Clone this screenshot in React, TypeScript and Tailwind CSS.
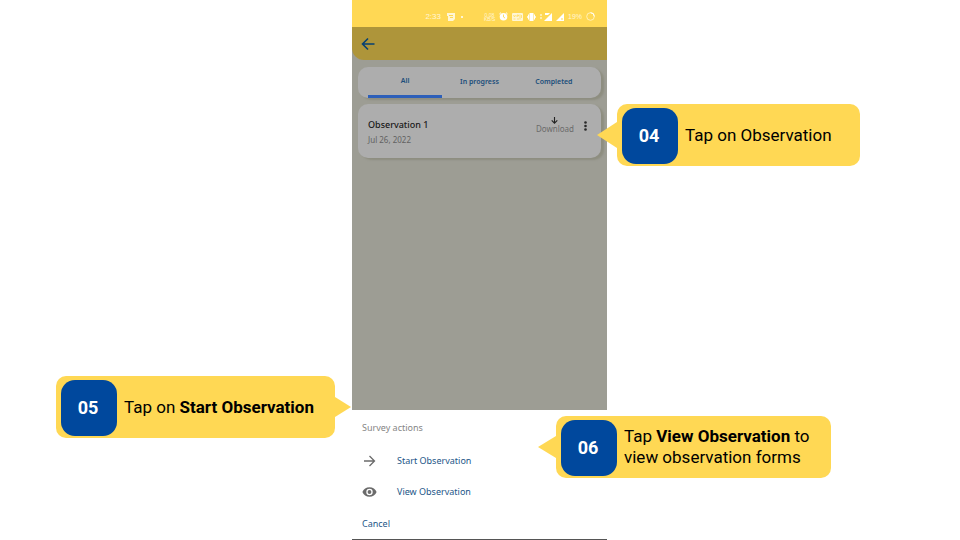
import React from "react";

type Side = "left" | "right";

function Callout({
  step,
  side,
  place,
  tail,
  children,
}: {
  step: string;
  side: Side;
  place: string;
  tail: string;
  children: React.ReactNode;
}) {
  return (
    <div
      className={`absolute flex items-center gap-[7px] rounded-[10px] bg-[#ffd854] pt-1 pb-0.5 pl-[5px] font-[Roboto,sans-serif] ${place}`}
    >
      <svg
        viewBox="0 0 20 26"
        preserveAspectRatio="none"
        className={`absolute ${tail}`}
        fill="#ffd854"
        aria-hidden="true"
      >
        <path d={side === "left" ? "M20 0L0 13l20 13z" : "M0 0l20 13L0 26z"} />
      </svg>
      <div className="flex size-14 shrink-0 items-center justify-center rounded-[14px] bg-[#00489d] text-lg font-bold text-white">
        <span className="pr-0.5">{step}</span>
      </div>
      <p className="pb-0.5 text-[17px] leading-[21px] whitespace-nowrap text-black">{children}</p>
    </div>
  );
}

function StatusBar() {
  return (
    <div className="flex h-[27px] shrink-0 items-center bg-[#ffd854] pt-[6px] pr-3 text-[#fff6d5]">
      <div className="ml-auto flex items-center gap-[6px]">
        <span className="font-['Liberation_Sans',sans-serif] text-[8px] leading-none">2:33</span>
        <svg className="h-2 w-2" viewBox="0 0 8 8" fill="currentColor" aria-hidden="true">
          <path fillRule="evenodd" d="M0 0h8v6l-2 2H1V3H0zM2 2v1h4V2zM3 4v1h3V4z" />
        </svg>
        <span className="size-[2px] rounded-full bg-white" />
      </div>
      <div className="ml-[21px] flex items-center gap-1">
        <span className="w-[11px] text-center font-['Liberation_Sans',sans-serif] text-[5px] leading-[4px]">
          0.08 KB/S
        </span>
        <svg className="h-[9px] w-[9px]" viewBox="0 0 9 9" fill="none" aria-hidden="true">
          <circle cx="4.5" cy="4.8" r="3.8" fill="#fff" />
          <path d="M.4 2L2 .6M8.6 2L7 .6" stroke="#fff" />
          <path d="M4.5 2.500v2.500l1.500 1" stroke="#ffd854" strokeWidth=".9" />
        </svg>
        <svg className="h-2 w-[11px]" viewBox="0 0 11 8" aria-hidden="true">
          <rect width="11" height="8" rx="1" fill="#fff6d5" />
          <path d="M1.500 2l1 2 1-2M5 4V2h1.500v1H5M8 1.500v5M1.500 6h2M5 6h2M9.500 2v3" stroke="#ffd854" fill="none" strokeWidth=".7" />
        </svg>
        <svg className="h-2 w-[9px]" viewBox="0 0 9 8" fill="#fff" aria-hidden="true">
          <path d="M2.500 0h4v8h-4zM1 1.500h1v5H1zM7 1.500h1v5H7zM0 3h.7v2H0zM8.300 3H9v2h-.7z" />
        </svg>
        <svg className="h-2 w-[12px]" viewBox="0 0 12 8" fill="#fff" aria-hidden="true">
          <path d="M12 0v8H4zM0 1.500h2v1H0zM0 4.500h2v1H0zM5 0h5L8 2H5z" />
        </svg>
        <svg className="h-2 w-2" viewBox="0 0 8 8" fill="#fff" aria-hidden="true">
          <path fillRule="evenodd" d="M8 0v8H0zM5.500 5v2h1V5z" />
        </svg>
        <span className="font-['Liberation_Sans',sans-serif] text-[7px] leading-none">19%</span>
        <svg className="h-[9px] w-[9px]" viewBox="0 0 9 9" fill="none" aria-hidden="true">
          <circle cx="4.500" cy="4.500" r="3.800" stroke="#fff0b8" />
          <path d="M4.500.7a3.800 3.800 0 0 1 3.800 3.800" stroke="#fff" />
        </svg>
      </div>
    </div>
  );
}

const tabs = ["All", "In progress", "Completed"];

export default function App() {
  return (
    <main className="flex h-screen justify-center bg-white pr-px">
      <div className="relative flex h-full w-[255px] flex-col font-['Noto_Sans',sans-serif]">
        <StatusBar />
        <div className="flex flex-1 flex-col bg-[#9d9d94]">
          <header className="flex h-[33px] shrink-0 items-center rounded-bl-xl bg-[#ae953a] px-[9px]">
            <button type="button" aria-label="Back">
              <svg className="h-[14px] w-[14px]" viewBox="0 0 14 14" fill="none" stroke="#064073" strokeWidth="1.600" aria-hidden="true">
                <path d="M13.500 7H1.500M7 1.500L1.500 7 7 12.500" />
              </svg>
            </button>
          </header>

          <nav className="mx-[6px] mt-[7px] grid h-[31px] shrink-0 grid-cols-3 rounded-[10px] bg-[#adadad] px-[10px] shadow-[3px_2px_2px_#8e8e80]">
            {tabs.map((tab, i) => (
              <button
                key={tab}
                type="button"
                className={
                  i === 0
                    ? "border-b-[3px] border-[#2d5fb9] text-[7px] font-semibold text-[#1b4d7b]"
                    : "text-[7px] font-semibold text-[#1b4d7b]"
                }
              >
                {tab}
              </button>
            ))}
          </nav>

          <section className="mx-[6px] mt-[6px] flex h-[54px] shrink-0 items-start rounded-[10px] bg-[#adadad] px-[10px] shadow-[3px_2px_2px_#8e8e80]">
            <div className="flex-1 pt-[15px]">
              <h2 className="text-[9px] leading-3 font-medium text-[#181818]">Observation 1</h2>
              <p className="mt-[3px] text-[8px] leading-3 text-[#626262]">Jul 26, 2022</p>
            </div>
            <button type="button" className="flex flex-col items-center pt-[13px] text-[8px] leading-[10px] text-[#6b6b6b]">
              <svg className="h-[7px] w-[7px]" viewBox="0 0 7 7" fill="none" stroke="#222" strokeWidth="1.100" aria-hidden="true">
                <path d="M3.500 0v6M.7 3.400l2.800 2.800 2.800-2.800" />
              </svg>
              Download
            </button>
            <button type="button" aria-label="More options" className="ml-[10px] pt-[17px] pr-1">
              <svg className="h-[10px] w-[3px]" viewBox="0 0 3 10" fill="#292929" aria-hidden="true">
                <circle cx="1.500" cy="1.500" r="1.300" />
                <circle cx="1.500" cy="5" r="1.300" />
                <circle cx="1.500" cy="8.500" r="1.300" />
              </svg>
            </button>
          </section>
        </div>

        <section className="flex h-[130px] shrink-0 flex-col items-start border-b border-[#555] bg-white px-[10px] text-[9px] leading-3 text-[#1c5688]">
          <h3 className="mt-3 text-[#858585]">Survey actions</h3>
          <button type="button" className="mt-[21px] flex items-center">
            <svg className="mr-[20px] h-3 w-[15px]" viewBox="0 0 15 12" fill="none" stroke="#6b6b6b" strokeWidth="1.300" aria-hidden="true">
              <path d="M2 6h10.500M7.500 1l5 5-5 5" />
            </svg>
            <span>Start Observation</span>
          </button>
          <button type="button" className="mt-[19px] flex items-center">
            <svg className="mr-[20px] h-3 w-[15px]" viewBox="0 0 15 12" fill="#6b6b6b" aria-hidden="true">
              <path
                fillRule="evenodd"
                d="M7.500 1.200C4.200 1.200 1.600 3.200.4 6c1.200 2.800 3.800 4.800 7.100 4.800s5.900-2 7.100-4.800C13.400 3.200 10.800 1.200 7.500 1.200zM7.500 9.200a3.200 3.200 0 1 1 0-6.400 3.200 3.200 0 0 1 0 6.400zM7.500 4.100a1.900 1.900 0 1 0 0 3.800 1.900 1.900 0 0 0 0-3.800z"
              />
            </svg>
            <span>View Observation</span>
          </button>
          <button type="button" className="mt-5">Cancel</button>
        </section>

        <Callout step="04" side="left" place="top-[104px] left-[265px] h-[62px] w-[243px]" tail="top-[18px] right-full h-[26px] w-5">
          Tap on Observation
        </Callout>
        <Callout step="05" side="right" place="top-[376px] right-[272px] h-[62px] w-[279px]" tail="top-[21px] left-full h-5 w-4">
          Tap on <strong>Start Observation</strong>
        </Callout>
        <Callout step="06" side="left" place="top-[416px] left-[204px] h-[62px] w-[275px]" tail="top-[20px] right-full h-[22px] w-[18px]">
          Tap <strong>View Observation</strong> to
          <br />
          view observation forms
        </Callout>
      </div>
    </main>
  );
}
